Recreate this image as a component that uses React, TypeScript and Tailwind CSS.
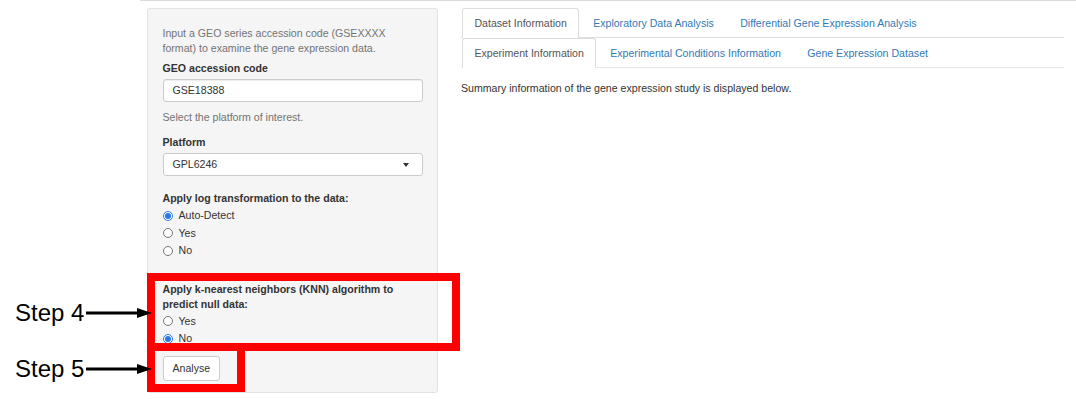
function Radio({ checked, label }: { checked?: boolean; label: string }) {
  return (
    <div className="flex items-center gap-[6px] h-[17.5px]">
      {checked ? (
        <span className="w-[10px] h-[10px] rounded-full border border-[#2a78e4] bg-white flex items-center justify-center">
          <span className="w-[6px] h-[6px] rounded-full bg-[#2a78e4]" />
        </span>
      ) : (
        <span className="w-[10px] h-[10px] rounded-full border border-[#767676] bg-white" />
      )}
      <span>{label}</span>
    </div>
  );
}

function Arrow({ top }: { top: number }) {
  return (
    <svg
      className="absolute left-[84px]"
      style={{ top }}
      width="70"
      height="14"
      viewBox="0 0 70 14"
    >
      <line x1="2" y1="7" x2="56" y2="7" stroke="#000" strokeWidth="3" />
      <polygon points="53,2 68,7 53,12" fill="#000" />
    </svg>
  );
}

export default function App() {
  return (
    <div className="relative w-[1076px] h-[400px] overflow-hidden bg-white text-[#333] text-[10.6px] leading-[15px] [font-family:'Liberation_Sans',Arial,sans-serif]">
      <div className="ml-[140px] h-px bg-[#dadada]" />
      <div className="flex pl-[147px] pt-[7px]">
        {/* Sidebar */}
        <div className="w-[291px] h-[385px] shrink-0 rounded-[3px] border border-[#e3e3e3] bg-[#f5f5f5] px-[14.5px]">
          <div className="mt-[16.5px] text-[#737373]">
            Input a GEO series accession code (GSEXXXX
            <br />
            format) to examine the gene expression data.
          </div>
          <div className="mt-[5px] font-bold">GEO accession code</div>
          <div className="mt-[3.5px] h-[23px] rounded-[3px] border border-[#ccc] bg-white pl-[9px] flex items-center shadow-[inset_0_1px_1px_rgba(0,0,0,0.075)]">
            GSE18388
          </div>
          <div className="mt-[7.5px] text-[#737373]">Select the platform of interest.</div>
          <div className="mt-[10px] font-bold">Platform</div>
          <div className="mt-[3.5px] h-[23px] rounded-[3px] border border-[#ccc] bg-white pl-[9px] pr-[12.5px] flex items-center justify-between">
            <span>GPL6246</span>
            <span className="w-0 h-0 border-l-[3.5px] border-r-[3.5px] border-t-[4px] border-l-transparent border-r-transparent border-t-[#333]" />
          </div>
          <div className="mt-[14.5px] font-bold">Apply log transformation to the data:</div>
          <div className="mt-[1.5px]">
            <Radio checked label="Auto-Detect" />
            <Radio label="Yes" />
            <Radio label="No" />
          </div>
          <div className="mt-[22px] font-bold">
            Apply k-nearest neighbors (KNN) algorithm to
            <br />
            predict null data:
          </div>
          <div className="mt-[1px]">
            <Radio label="Yes" />
            <Radio checked label="No" />
          </div>
          <div className="mt-[8.5px] inline-flex h-[25px] items-center rounded-[3px] border border-[#ccc] bg-white px-[9px]">
            Analyse
          </div>
        </div>

        {/* Main */}
        <div className="ml-[23px] w-[603px]">
          <div className="flex border-b border-[#ddd]">
            <div className="ml-px mr-[1.5px] -mb-px h-[30px] flex items-center px-[11.4px] border border-[#ddd] border-b-transparent rounded-t-[3px] bg-white text-[#555]">
              Dataset Information
            </div>
            <div className="mr-[1.5px] -mb-px h-[30px] flex items-center px-[11.4px] border border-transparent text-[#337ab7]">
              Exploratory Data Analysis
            </div>
            <div className="mr-[1.5px] -mb-px h-[30px] flex items-center px-[11.4px] border border-transparent text-[#337ab7]">
              Differential Gene Expression Analysis
            </div>
          </div>
          <div className="flex border-b border-[#e6e6e6]">
            <div className="ml-px mr-[1.5px] -mb-px h-[30px] flex items-center px-[11.4px] border border-[#ddd] border-b-transparent rounded-t-[3px] bg-white text-[#555]">
              Experiment Information
            </div>
            <div className="mr-[1.5px] -mb-px h-[30px] flex items-center px-[11.4px] border border-transparent text-[#337ab7]">
              Experimental Conditions Information
            </div>
            <div className="mr-[1.5px] -mb-px h-[30px] flex items-center px-[11.4px] border border-transparent text-[#337ab7]">
              Gene Expression Dataset
            </div>
          </div>
          <div className="mt-[12.5px]">
            Summary information of the gene expression study is displayed below.
          </div>
        </div>
      </div>

      {/* Annotation overlays */}
      <div className="absolute left-[147px] top-[273px] w-[313px] h-[78px] border-[8px] border-[#ff0000]" />
      <div className="absolute left-[147px] top-[343px] w-[98px] h-[49px] border-[8px] border-[#ff0000]" />
      <div className="absolute left-[15px] top-[301px] text-[24px] leading-[24px] text-black">Step 4</div>
      <div className="absolute left-[15px] top-[357px] text-[24px] leading-[24px] text-black">Step 5</div>
      <Arrow top={306} />
      <Arrow top={362} />
    </div>
  );
}
